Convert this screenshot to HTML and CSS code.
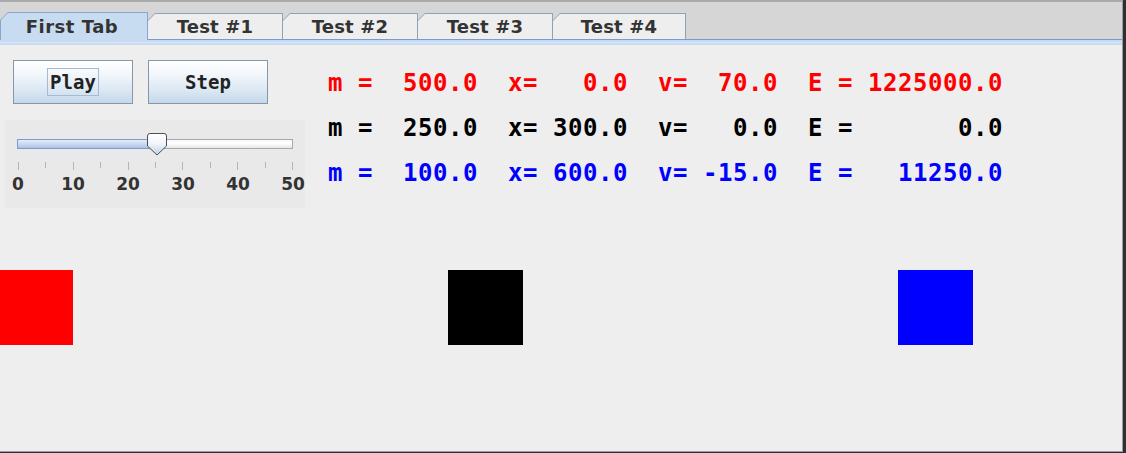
FILE: index.html
```html
<!DOCTYPE html>
<html>
<head>
<meta charset="utf-8">
<title>Collisions</title>
<link rel="stylesheet" href="styles.css">
</head>
<body>
<div class="window">
  <div class="tabstrip">
    <div class="tab tab-selected"><div class="tab-inner">First Tab</div></div>
    <div class="tab"><div class="tab-inner">Test #1</div></div>
    <div class="tab"><div class="tab-inner">Test #2</div></div>
    <div class="tab"><div class="tab-inner">Test #3</div></div>
    <div class="tab tab-last"><div class="tab-inner">Test #4</div></div>
  </div>
  <div class="content">
    <div class="band"></div>
    <div class="panel">
      <div class="controls">
        <div class="buttons">
          <button class="btn"><span class="focus">Play</span></button>
          <button class="btn"><span class="nofocus">Step</span></button>
        </div>
        <div class="slider">
          <div class="track">
            <div class="track-fill" style="width:139px"></div>
            <svg class="thumb" width="22" height="24" viewBox="0 0 22 24">
              <defs>
                <linearGradient id="tg" x1="0" y1="0" x2="0" y2="1">
                  <stop offset="0" stop-color="#ffffff"/>
                  <stop offset="0.45" stop-color="#f2f6fb"/>
                  <stop offset="1" stop-color="#bcd1ea"/>
                </linearGradient>
              </defs>
              <path d="M1.5 4 Q1.5 1.5 4 1.5 H18 Q20.5 1.5 20.5 4 V14 L11 23 L1.5 14 Z" fill="url(#tg)" stroke="#4f4f4f" stroke-width="1"/>
            </svg>
          </div>
          <div class="ticks">
            <i class="major"></i><i></i><i class="major"></i><i></i><i class="major"></i><i></i><i class="major"></i><i></i><i class="major"></i><i></i><i class="major"></i>
          </div>
          <div class="labels">
            <span>0</span><span>10</span><span>20</span><span>30</span><span>40</span><span>50</span>
          </div>
        </div>
      </div>
      <div class="readout">
        <div class="line red">m =  500.0  x=   0.0  v=  70.0  E = 1225000.0</div>
        <div class="line black">m =  250.0  x= 300.0  v=   0.0  E =       0.0</div>
        <div class="line blue">m =  100.0  x= 600.0  v= -15.0  E =   11250.0</div>
      </div>
      <div class="block block-red"></div>
      <div class="block block-black"></div>
      <div class="block block-blue"></div>
    </div>
  </div>
</div>
</body>
</html>
```

FILE: styles.css
```css
html, body {
  margin: 0;
  padding: 0;
}
body {
  background: #2f2f2f;
  width: 1126px;
  height: 453px;
  overflow: hidden;
  font-family: "DejaVu Sans", sans-serif;
}
.window {
  width: 1122px;
  height: 449px;
  border-top: 2px solid #a9a9a9;
  border-right: 1px solid #9c9c9c;
  border-bottom: 1px solid #9c9c9c;
  background: #eeeeee;
  overflow: hidden;
  display: flex;
  flex-direction: column;
}
.tabstrip {
  height: 37px;
  background: #d6d6d6;
  display: flex;
  align-items: flex-end;
  flex: none;
}
.tab {
  width: 136px;
  height: 26px;
  margin-left: -1px;
  padding: 1px 1px 0 1px;
  box-sizing: border-box;
  background: #8fa2b6;
  clip-path: polygon(0 8px, 8px 0, 100% 0, 100% 100%, 0 100%);
}
.tab-last {
  width: 134px;
}
.tab-inner {
  height: 100%;
  background: #eeeeee;
  clip-path: polygon(0 7px, 7px 0, 100% 0, 100% 100%, 0 100%);
  color: #333333;
  font-family: "DejaVu Sans", sans-serif;
  font-weight: bold;
  font-size: 18px;
  line-height: 25px;
  text-align: center;
  letter-spacing: 0.2px;
}
.tab-selected {
  width: 148px;
  height: 28px;
  margin-left: 0;
  margin-bottom: -1px;
  padding-bottom: 0;
  background: #8aa4cf;
  position: relative;
  z-index: 1;
}
.tab-selected .tab-inner {
  background: #c8dcf1;
  line-height: 27px;
  letter-spacing: 0.5px;
  padding-right: 4px;
}
.content {
  flex: 1;
  display: flex;
  flex-direction: column;
  border-top: 1px solid #7b9ad0;
}
.band {
  height: 5px;
  flex: none;
  background: linear-gradient(#c6daf1 0, #c6daf1 2px, #dce8f6 2px, #dce8f6 3px, #c6daf1 3px);
}
.panel {
  flex: 1;
  position: relative;
  display: flex;
  align-items: flex-start;
  padding: 15px 0 0 5px;
}
.controls {
  width: 300px;
  display: flex;
  flex-direction: column;
}
.buttons {
  display: flex;
  gap: 15px;
  padding-left: 8px;
}
.btn {
  width: 120px;
  height: 44px;
  margin: 0;
  padding: 0;
  border: 1px solid #8697a8;
  background: linear-gradient(#ffffff 0%, #f3f7fb 30%, #dbe7f3 70%, #c5d8ec 100%);
  font-family: "DejaVu Sans Mono", monospace;
  font-weight: bold;
  font-size: 19px;
  color: #222222;
  display: flex;
  align-items: center;
  justify-content: center;
}
.focus {
  display: block;
  border: 1px solid #a6bbd3;
  padding: 0 2px;
  line-height: 26px;
}
.nofocus {
  display: block;
  border: 1px solid transparent;
  padding: 0 2px;
  line-height: 26px;
}
.slider {
  margin-top: 16px;
  width: 300px;
  height: 88px;
  background: #e9e9e9;
  display: flex;
  flex-direction: column;
}
.track {
  position: relative;
  margin: 19px 0 0 12px;
  width: 276px;
  height: 10px;
  box-sizing: border-box;
  border: 1px solid #a2a9b2;
  background: linear-gradient(#f6f6f6, #ffffff 40%, #e6e6e6);
}
.track-fill {
  position: absolute;
  left: -1px;
  top: -1px;
  bottom: -1px;
  border: 1px solid #7c9bd2;
  background: linear-gradient(#e3ecf8, #c9daf0 50%, #a9c2e4);
}
.thumb {
  position: absolute;
  left: 128px;
  top: -8px;
  display: block;
}
.ticks {
  margin: 13px 0 0 13px;
  width: 275px;
  height: 8px;
  display: flex;
  justify-content: space-between;
  align-items: flex-start;
}
.ticks i {
  display: block;
  width: 1px;
  height: 6px;
  background: #a6b9cd;
}
.ticks i.major {
  height: 8px;
}
.labels {
  margin-top: 6px;
  width: 301px;
  display: flex;
  justify-content: space-between;
}
.labels span {
  width: 26px;
  text-align: center;
  font-family: "DejaVu Sans", sans-serif;
  font-weight: bold;
  font-size: 17px;
  line-height: 17px;
  color: #333333;
  white-space: nowrap;
}
.readout {
  margin-left: 23px;
  margin-top: 1px;
}
.line {
  font-family: "DejaVu Sans Mono", monospace;
  font-weight: bold;
  font-size: 24px;
  letter-spacing: 0.55px;
  line-height: 45px;
  white-space: pre;
}
.red { color: #ff0000; }
.black { color: #000000; }
.blue { color: #0000ff; }
.block {
  position: absolute;
  top: 225px;
  width: 75px;
  height: 75px;
}
.block-red { left: -2px; background: #ff0000; }
.block-black { left: 448px; background: #000000; }
.block-blue { left: 898px; background: #0000ff; }
```
